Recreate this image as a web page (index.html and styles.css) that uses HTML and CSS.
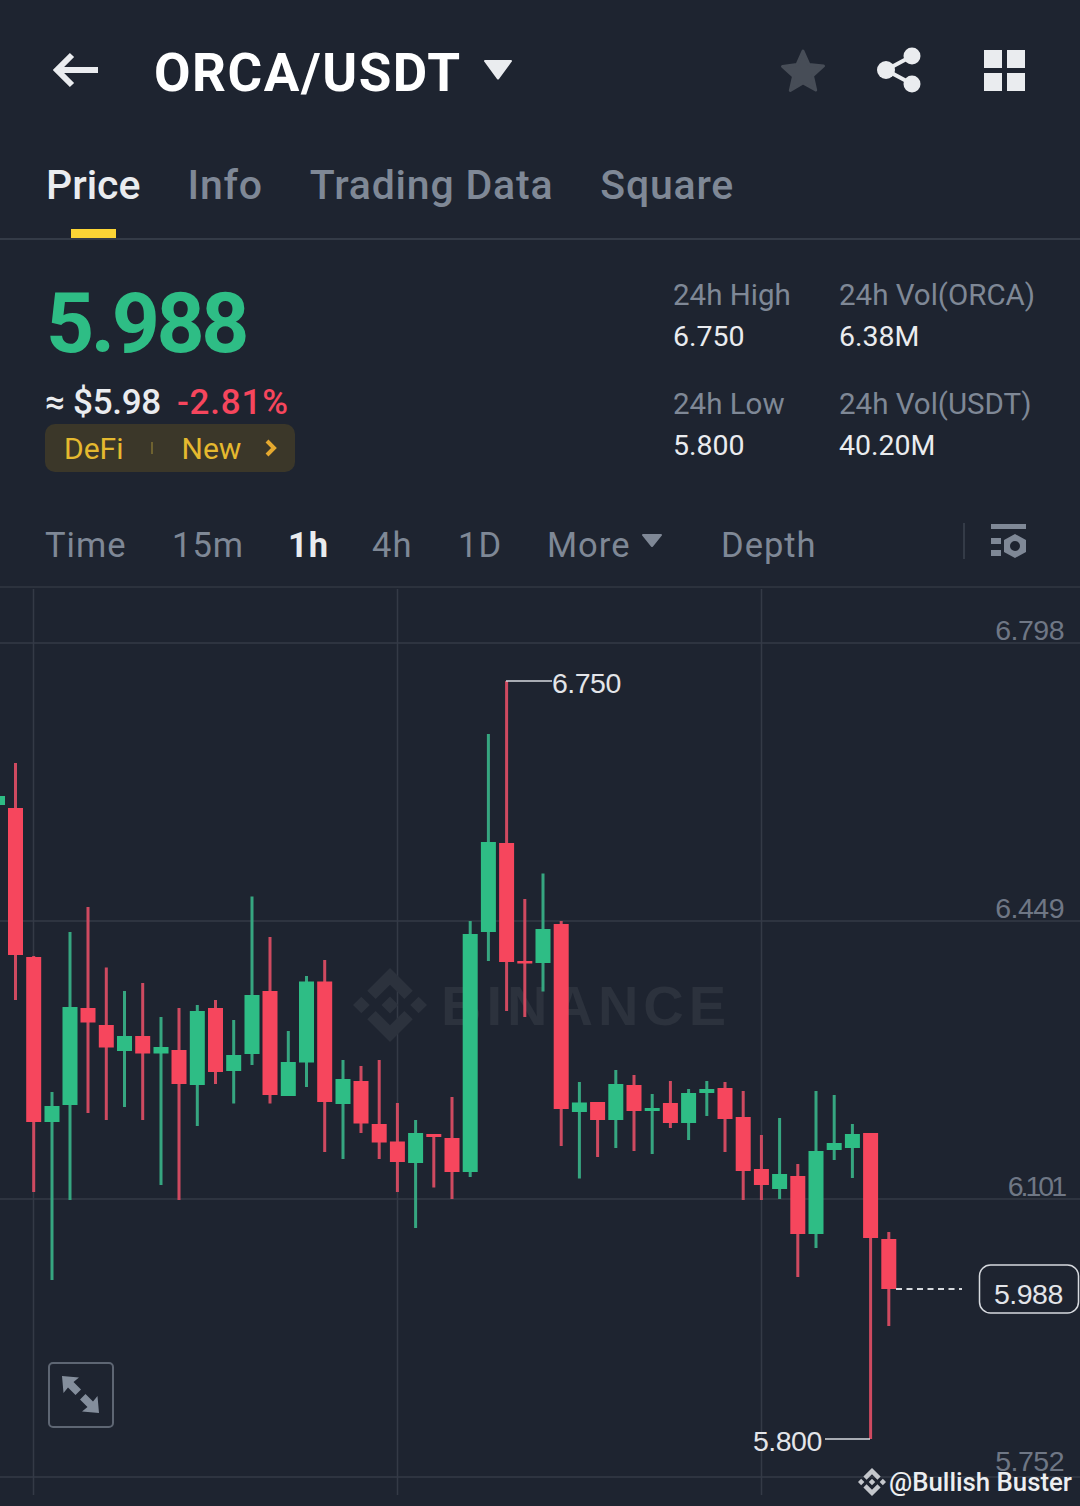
FILE: index.html
```html
<!doctype html>
<html lang="en">
  <head>
    <meta charset="UTF-8" />
    <meta name="viewport" content="width=device-width, initial-scale=1.0" />
    <title>ORCA/USDT</title>
    <link rel="stylesheet" href="styles.css">
  </head>
  <body>
    <header class="topbar">
      <svg class="back-icon" width="46" height="36" viewBox="0 0 46 36">
        <path d="M46 18H5M20 3 5 18l15 15" />
      </svg>
      <h1 class="pair">ORCA/USDT</h1>
      <svg class="pair-caret" width="28" height="20" viewBox="0 0 28 20">
        <path d="M1 0h26a1 1 0 0 1 .8 1.6L15 19a1.3 1.3 0 0 1-2 0L.2 1.6A1 1 0 0 1 1 0z" />
      </svg>
      <div class="topbar-actions">
        <svg class="star-icon" width="46" height="46" viewBox="0 0 46 46">
          <path d="M23 3l6 13.5 14.500 1.500-11 9.800 3.200 14.200L23 35l-12.700 7.500 3.200-14.200-11-9.800L17 16.500z" />
        </svg>
        <svg class="share-icon" width="44" height="46" viewBox="0 0 44 46">
          <path class="share-lines" d="M35 9 9 23l26 14" />
          <circle cx="35" cy="9" r="8.500" />
          <circle cx="9" cy="23" r="9" />
          <circle cx="35" cy="37" r="8.500" />
        </svg>
        <svg class="grid-icon" width="41" height="41" viewBox="0 0 41 41">
          <rect width="18" height="18" />
          <rect x="23" width="18" height="18" />
          <rect y="23" width="18" height="18" />
          <rect x="23" y="23" width="18" height="18" />
        </svg>
      </div>
    </header>

    <nav class="tabs">
      <a class="tab active">Price</a>
      <a class="tab">Info</a>
      <a class="tab">Trading Data</a>
      <a class="tab">Square</a>
    </nav>

    <section class="summary">
      <div class="quote">
        <div class="last-price">5.988</div>
        <div class="quote-row">
          <span class="fiat">≈ $5.98</span>
          <span class="change">-2.81%</span>
        </div>
        <div class="tags">
          <span>DeFi</span>
          <i class="tag-sep"></i>
          <span>New</span>
          <svg class="tag-chevron" width="12" height="18" viewBox="0 0 12 18">
            <path d="M2 2l7 7-7 7" />
          </svg>
        </div>
      </div>
      <dl class="stats">
        <div class="stat"><dt>24h High</dt><dd>6.750</dd></div>
        <div class="stat"><dt>24h Vol(ORCA)</dt><dd>6.38M</dd></div>
        <div class="stat"><dt>24h Low</dt><dd>5.800</dd></div>
        <div class="stat"><dt>24h Vol(USDT)</dt><dd>40.20M</dd></div>
      </dl>
    </section>

    <div class="intervals">
      <span class="interval i-time">Time</span>
      <span class="interval i-15m">15m</span>
      <span class="interval i-1h active">1h</span>
      <span class="interval i-4h">4h</span>
      <span class="interval i-1d">1D</span>
      <span class="interval i-more">More</span>
      <svg class="more-caret" width="20" height="13" viewBox="0 0 20 13">
        <path d="M1 0h18a1 1 0 0 1 .8 1.600L11 12.500a1.300 1.300 0 0 1-2 0L.2 1.600A1 1 0 0 1 1 0z" />
      </svg>
      <span class="interval i-depth">Depth</span>
      <i class="interval-sep"></i>
      <svg class="settings-icon" width="36" height="36" viewBox="0 0 36 36">
        <rect x="1" y="1" width="35" height="5" />
        <rect x="1" y="15" width="10" height="6" />
        <rect x="1" y="27" width="10" height="6" />
        <path fill-rule="evenodd" d="M25 11l11 6v12l-11 6-11-6V17zM25 18a5 5 0 1 0 0 10 5 5 0 0 0 0-10z" />
      </svg>
    </div>

    <div class="chart">
      <svg class="chart-svg" width="1080" height="918" viewBox="0 588 1080 918">
        <g class="grid">
          <path d="M0 643H1080M0 921H1080M0 1199H1080M0 1477H1080M33.500 589V1495M397.500 589V1495M761.500 589V1495" />
        </g>

        <g class="watermark">
          <svg x="353" y="968" width="74" height="74" viewBox="0 0 126.610 126.610">
            <path d="M38.730 53.200l24.590-24.580 24.600 24.600 14.300-14.310L63.320 0 24.420 38.900zM0 63.310L14.300 49l14.310 14.310-14.310 14.300zM38.730 73.410L63.320 98l24.600-24.600 14.310 14.290L63.320 126.610 24.400 87.690zM97.990 63.310l14.300-14.300 14.320 14.300-14.310 14.300zM77.830 63.300L63.320 48.780 48.820 63.280l14.500 14.500z" />
          </svg>
          <text x="441" y="1025">BINANCE</text>
        </g>

        <g class="axis">
          <text x="1064" y="640">6.798</text>
          <text x="1064" y="918">6.449</text>
          <text class="tight" x="1064" y="1196">6.101</text>
          <text x="1064" y="1471">5.752</text>
        </g>

        <g class="candles">
          <rect class="body up" x="-10" y="796" height="9" />
          <rect class="wick down" x="14.500" y="763" height="237" /><rect class="body down" x="8" y="808" height="147" />
          <rect class="wick down" x="32.700" y="956" height="236" /><rect class="body down" x="26.200" y="957" height="165" />
          <rect class="wick up" x="51" y="1092" height="188" /><rect class="body up" x="44.500" y="1106" height="16" />
          <rect class="wick up" x="69" y="932" height="268" /><rect class="body up" x="62.500" y="1007" height="98" />
          <rect class="wick down" x="87" y="907" height="206" /><rect class="body down" x="80.500" y="1008" height="14.500" />
          <rect class="wick down" x="105.300" y="967.500" height="152.500" /><rect class="body down" x="98.800" y="1025" height="22.500" />
          <rect class="wick up" x="123.500" y="991" height="116" /><rect class="body up" x="117" y="1036" height="15" />
          <rect class="wick down" x="141.700" y="983" height="137" /><rect class="body down" x="135.200" y="1036" height="17.500" />
          <rect class="wick up" x="160" y="1017" height="168" /><rect class="body up" x="153.500" y="1047" height="6.500" />
          <rect class="wick down" x="178" y="1008" height="192" /><rect class="body down" x="171.500" y="1050" height="34" />
          <rect class="wick up" x="196.300" y="1005" height="121" /><rect class="body up" x="189.800" y="1011" height="74" />
          <rect class="wick down" x="214.500" y="1000" height="84" /><rect class="body down" x="208" y="1008" height="64" />
          <rect class="wick up" x="232.700" y="1020" height="83.500" /><rect class="body up" x="226.200" y="1055" height="16" />
          <rect class="wick up" x="251" y="896.500" height="168.500" /><rect class="body up" x="244.500" y="995" height="59" />
          <rect class="wick down" x="269" y="937" height="166.500" /><rect class="body down" x="262.500" y="991" height="104" />
          <rect class="wick up" x="287.300" y="1031" height="65" /><rect class="body up" x="280.800" y="1062" height="34" />
          <rect class="wick up" x="305.500" y="976" height="111" /><rect class="body up" x="299" y="981.500" height="81" />
          <rect class="wick down" x="323.700" y="960" height="192" /><rect class="body down" x="317.200" y="981.500" height="120.500" />
          <rect class="wick up" x="342" y="1060" height="99" /><rect class="body up" x="335.500" y="1079" height="25" />
          <rect class="wick down" x="360" y="1066" height="67" /><rect class="body down" x="353.500" y="1081" height="42.500" />
          <rect class="wick down" x="378.200" y="1060" height="99" /><rect class="body down" x="371.700" y="1124" height="18.500" />
          <rect class="wick down" x="396.400" y="1103" height="89" /><rect class="body down" x="389.900" y="1141.500" height="20.500" />
          <rect class="wick up" x="414.600" y="1120" height="108" /><rect class="body up" x="408.100" y="1133" height="30" />
          <rect class="wick down" x="432.800" y="1134" height="53.500" /><rect class="body down" x="426.300" y="1134" height="3" />
          <rect class="wick down" x="451" y="1097" height="102" /><rect class="body down" x="444.500" y="1138" height="34" />
          <rect class="wick up" x="469.200" y="921" height="256" /><rect class="body up" x="462.700" y="934" height="238" />
          <rect class="wick up" x="487.400" y="734" height="227" /><rect class="body up" x="480.900" y="842" height="90" />
          <rect class="wick down" x="505.600" y="681" height="330" /><rect class="body down" x="499.100" y="843" height="119" />
          <rect class="wick down" x="523.800" y="899" height="118" /><rect class="body down" x="517.300" y="961" height="2.500" />
          <rect class="wick up" x="542" y="873.500" height="118" /><rect class="body up" x="535.500" y="929" height="34" />
          <rect class="wick down" x="560.200" y="921" height="225" /><rect class="body down" x="553.700" y="924" height="185" />
          <rect class="wick up" x="578.400" y="1082" height="96.500" /><rect class="body up" x="571.900" y="1102.500" height="9.500" />
          <rect class="wick down" x="596.600" y="1102" height="55" /><rect class="body down" x="590.100" y="1102" height="18" />
          <rect class="wick up" x="614.800" y="1070" height="78" /><rect class="body up" x="608.300" y="1084" height="36" />
          <rect class="wick down" x="633" y="1075" height="76" /><rect class="body down" x="626.500" y="1085" height="26" />
          <rect class="wick up" x="651.200" y="1094" height="60" /><rect class="body up" x="644.700" y="1108" height="3" />
          <rect class="wick down" x="669.400" y="1081" height="47" /><rect class="body down" x="662.900" y="1103" height="20" />
          <rect class="wick up" x="687.600" y="1089" height="51" /><rect class="body up" x="681.100" y="1093" height="30" />
          <rect class="wick up" x="705.800" y="1081" height="35" /><rect class="body up" x="699.300" y="1089" height="4" />
          <rect class="wick down" x="724" y="1082" height="70" /><rect class="body down" x="717.500" y="1088" height="31" />
          <rect class="wick down" x="742.200" y="1091" height="109" /><rect class="body down" x="735.700" y="1117" height="54" />
          <rect class="wick down" x="760.400" y="1135" height="65" /><rect class="body down" x="753.900" y="1169" height="16" />
          <rect class="wick up" x="778.600" y="1118" height="81" /><rect class="body up" x="772.100" y="1174" height="15" />
          <rect class="wick down" x="796.800" y="1164" height="113" /><rect class="body down" x="790.300" y="1176" height="58" />
          <rect class="wick up" x="815" y="1091" height="157" /><rect class="body up" x="808.500" y="1151" height="83" />
          <rect class="wick up" x="833.200" y="1095" height="65" /><rect class="body up" x="826.700" y="1143" height="7" />
          <rect class="wick up" x="851.400" y="1124" height="54" /><rect class="body up" x="844.900" y="1134" height="14" />
          <rect class="wick down" x="869.600" y="1133" height="306" /><rect class="body down" x="863.100" y="1133" height="105" />
          <rect class="wick down" x="887.800" y="1232" height="94" /><rect class="body down" x="881.300" y="1239" height="50" />
        </g>

        <g class="marks">
          <path d="M506 681H552M825 1439H870" />
          <text x="552" y="693">6.750</text>
          <text x="753" y="1451">5.800</text>
          <path class="last-line" d="M896 1289H962" />
          <rect class="last-box" x="979.500" y="1265" width="99" height="48" rx="11" />
          <text x="994" y="1304">5.988</text>
        </g>
      </svg>

      <button class="expand" type="button">
        <svg width="40" height="40" viewBox="0 0 40 40">
          <path d="M1 1l17 1.500-5.500 4.500 7.500 7.500-5.500 5.500L7 12.500 2.500 18zM38 38l-17-1.500 5.500-4.500-7.500-7.500 5.500-5.500 7.500 7.500 4.500-5.500z" />
        </svg>
      </button>

      <div class="credit">
        <svg width="28" height="28" viewBox="0 0 126.610 126.610">
          <path d="M38.730 53.200l24.590-24.580 24.600 24.600 14.300-14.310L63.320 0 24.420 38.900zM0 63.310L14.300 49l14.310 14.310-14.310 14.300zM38.730 73.410L63.320 98l24.600-24.600 14.310 14.290L63.320 126.610 24.400 87.690zM97.990 63.310l14.300-14.300 14.320 14.300-14.310 14.300zM77.830 63.300L63.320 48.780 48.820 63.280l14.500 14.500z" />
        </svg>
        <span>@Bullish Buster</span>
      </div>
    </div>
  </body>
</html>
```

FILE: styles.css
```css
* {
  box-sizing: border-box;
}
body {
  margin: 0;
  width: 1080px;
  height: 1506px;
  overflow: hidden;
  background: #1e2430;
  color: #eaecef;
  font-family: Roboto, "Noto Sans", sans-serif;
}

/* top bar */
.topbar {
  display: flex;
  align-items: center;
  height: 140px;
  padding: 0 55px 0 52px;
}
.back-icon {
  margin-right: 56px;
  fill: none;
  stroke: #eaecef;
  stroke-width: 6;
}
.pair {
  margin: 6px 22px 0 0;
  font-size: 53px;
  font-weight: 700;
  line-height: 1;
  letter-spacing: 1.550px;
  color: #fff;
}
.pair-caret {
  margin-top: 0;
  fill: #eaecef;
}
.topbar-actions {
  display: flex;
  align-items: center;
  margin-left: auto;
}
.star-icon {
  margin: 2px 51px 0 0;
  fill: #474d57;
  stroke: #474d57;
  stroke-width: 3;
  stroke-linejoin: round;
}
.share-icon {
  margin-right: 63px;
  fill: #eaecef;
}
.share-lines {
  fill: none;
  stroke: #eaecef;
  stroke-width: 4;
}
.grid-icon {
  fill: #eaecef;
}

/* tabs */
.tabs {
  display: flex;
  gap: 47px;
  height: 100px;
  padding-left: 46px;
  border-bottom: 2px solid #343b47;
}
.tab {
  position: relative;
  font-size: 41px;
  font-weight: 500;
  line-height: 90px;
  letter-spacing: 0.800px;
  color: #7f8896;
}
.tab.active {
  letter-spacing: 0;
  color: #eaecef;
}
.tab.active::after {
  content: "";
  position: absolute;
  left: 25px;
  bottom: 0;
  width: 45px;
  height: 9px;
  background: #fcd535;
}

/* price summary */
.summary {
  display: flex;
  justify-content: space-between;
  height: 232px;
  padding: 39px 47px 0 45px;
}
.last-price {
  margin-left: 1px;
  font-size: 84px;
  font-weight: 700;
  line-height: 90px;
  letter-spacing: -3.400px;
  color: #2ebd85;
}
.quote-row {
  display: flex;
  gap: 16px;
  margin-top: 12px;
  font-size: 35px;
  font-weight: 500;
  line-height: 44px;
}
.fiat {
  letter-spacing: -0.300px;
}
.change {
  letter-spacing: 0.800px;
  color: #f6465d;
}
.tags {
  display: flex;
  align-items: center;
  width: 250px;
  height: 48px;
  margin-top: -1px;
  padding-left: 19px;
  border-radius: 10px;
  background: #3b3729;
  font-size: 30px;
  color: #e5b92f;
}
.tag-sep {
  width: 2px;
  height: 12px;
  margin: 0 28px 0 28px;
  background: #6e6230;
}
.tag-chevron {
  margin-left: 24px;
  fill: none;
  stroke: #e5a92f;
  stroke-width: 4;
}
.stats {
  display: grid;
  grid-template-columns: 166px 194px;
  grid-auto-rows: 108.500px;
  margin: -4px 0 0;
  white-space: nowrap;
}
.stat dt {
  font-size: 29.500px;
  line-height: 40px;
  color: #7f8896;
}
.stat dd {
  margin: 2px 0 0;
  font-size: 28.500px;
  line-height: 40px;
  color: #eaecef;
}

/* interval bar */
.intervals {
  position: relative;
  height: 116px;
  border-bottom: 2px solid #2c323d;
}
.interval {
  position: absolute;
  top: 51px;
  font-size: 34.500px;
  line-height: 44px;
  letter-spacing: 1px;
  color: #7f8896;
}
.interval.active {
  font-weight: 700;
  color: #eaecef;
}
.i-time { left: 45px; }
.i-15m { left: 172px; }
.i-1h { left: 288px; }
.i-4h { left: 372px; }
.i-1d { left: 458px; }
.i-more { left: 547px; }
.i-depth { left: 721px; }
.more-caret {
  position: absolute;
  left: 642px;
  top: 62px;
  fill: #7f8896;
}
.interval-sep {
  position: absolute;
  left: 963px;
  top: 51px;
  width: 2px;
  height: 36px;
  background: #343b47;
}
.settings-icon {
  position: absolute;
  left: 990px;
  top: 51px;
  fill: #7f8896;
}

/* chart */
.chart {
  position: relative;
  height: 918px;
}
.chart-svg {
  display: block;
}
.grid path {
  fill: none;
  stroke: #343a46;
  stroke-width: 1.500;
}
.watermark {
  fill: #2c323d;
}
.watermark text {
  font-family: "Liberation Sans", sans-serif;
  font-size: 56px;
  font-weight: 700;
  letter-spacing: 5px;
}
.axis text {
  font-family: "Liberation Sans", sans-serif;
  font-size: 28.500px;
  letter-spacing: -0.500px;
  text-anchor: end;
  fill: #6f7785;
}
.axis .tight {
  letter-spacing: -3px;
}
.wick {
  width: 3px;
  transform: translateX(-0.500px);
}
.body {
  width: 15px;
}
.body.up {
  fill: #2ebd85;
}
.body.down {
  fill: #f6465d;
}
.wick.up {
  fill: #36a680;
}
.wick.down {
  fill: #cf4a60;
}
.marks path {
  fill: none;
  stroke: #d6d9de;
  stroke-width: 1.500;
}
.marks .last-line {
  stroke-width: 2;
  stroke-dasharray: 6 4.500;
}
.marks text {
  font-family: "Liberation Sans", sans-serif;
  font-size: 28.500px;
  letter-spacing: -0.500px;
  fill: #e3e5e9;
}
.last-box {
  fill: #1e2430;
  stroke: #d6d9de;
  stroke-width: 1.500;
}
.expand {
  position: absolute;
  left: 48px;
  top: 774px;
  display: flex;
  align-items: center;
  justify-content: center;
  width: 66px;
  height: 66px;
  padding: 0;
  border: 2px solid #5e6673;
  border-radius: 5px;
  background: none;
}
.expand svg {
  fill: #848e9c;
}
.credit {
  position: absolute;
  right: 8px;
  top: 880px;
  display: flex;
  align-items: center;
  gap: 3px;
  font-size: 25.800px;
  font-weight: 500;
  line-height: 28px;
  color: #eceef0;
}
.credit svg {
  fill: #c4c7cc;
}
```
